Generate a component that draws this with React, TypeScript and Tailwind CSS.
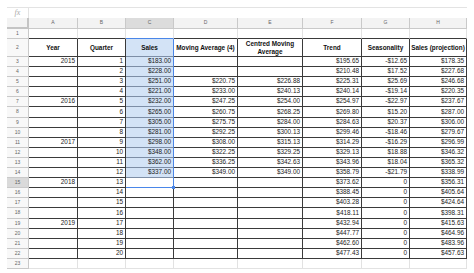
import React from 'react';

const grid = 'grid grid-cols-[22px_49px_48px_48px_64px_65px_59px_48px_57px]';
const letters = ['A', 'B', 'C', 'D', 'E', 'F', 'G', 'H'];

const sales = ['$183.00', '$228.00', '$251.00', '$221.00', '$232.00', '$265.00', '$305.00', '$281.00', '$298.00', '$348.00', '$362.00', '$337.00'];
const movingAvg = ['', '', '$220.75', '$233.00', '$247.25', '$260.75', '$275.75', '$292.25', '$308.00', '$322.25', '$336.25', '$349.00'];
const centred = ['', '', '$226.88', '$240.13', '$254.00', '$268.25', '$284.00', '$300.13', '$315.13', '$329.25', '$342.63', '$349.00'];
const trend = ['$195.65', '$210.48', '$225.31', '$240.14', '$254.97', '$269.80', '$284.63', '$299.46', '$314.29', '$329.13', '$343.96', '$358.79', '$373.62', '$388.45', '$403.28', '$418.11', '$432.94', '$447.77', '$462.60', '$477.43'];
const season = ['-$12.65', '$17.52', '$25.69', '-$19.14', '-$22.97', '$15.20', '$20.37', '-$18.46', '-$16.29', '$18.88', '$18.04', '-$21.79', '0', '0', '0', '0', '0', '0', '0', '0'];
const projection = ['$178.35', '$227.68', '$246.68', '$220.35', '$237.67', '$287.00', '$306.00', '$279.67', '$296.99', '$346.32', '$365.32', '$338.99', '$356.31', '$405.64', '$424.64', '$398.31', '$415.63', '$464.96', '$483.96', '$457.63'];
const years: Record<number, string> = { 3: '2015', 7: '2016', 11: '2017', 15: '2018', 19: '2019' };

const headers = ['Year', 'Quarter', 'Sales', 'Moving Average (4)', 'Centred Moving Average', 'Trend', 'Seasonality', 'Sales (projection)'];

// a couple of rows are a pixel taller so the grid lines up with the screenshot
const rowHeight = (row: number) => (row === 8 || row === 18 ? 'h-[11px]' : 'h-[10px]');

function RowLabel({ n, h }: { n: number; h: string }) {
  return (
    <div
      className={
        'flex items-center justify-center border-r border-b border-[#c9c9c9] text-[5px] text-[#666] ' +
        (n === 15 ? 'bg-[#dadada] ' : 'bg-[#f8f8f8] ') +
        h
      }
    >
      {n}
    </div>
  );
}

function cellTone(row: number, col: number) {
  if (row === 1) {
    return col === 2
      ? 'border-r-[#e2e2e2] border-b-[#4a86e8]'
      : 'border-r-[#e2e2e2] border-b-[#3a3a3a]';
  }
  if (row === 23) return 'border-[#e2e2e2]';
  if (col === 2 && row <= 14) return 'bg-[#d3e3f6] border-b-[#7d8ea6] border-r-[#4a86e8]';
  if (col === 2 && row === 15) return 'border-b-[#4a86e8] border-r-[#4a86e8] relative';
  return 'border-[#3a3a3a]';
}

function DataRow({ row }: { row: number }) {
  const i = row - 3;
  const values =
    row >= 3 && row <= 22
      ? [
          years[row] ?? '',
          String(row - 2),
          sales[i] ?? '',
          movingAvg[i] ?? '',
          centred[i] ?? '',
          trend[i],
          season[i],
          projection[i],
        ]
      : ['', '', '', '', '', '', '', ''];
  const h = rowHeight(row);

  return (
    <div className={grid}>
      <RowLabel n={row} h={h} />
      {values.map((v, col) => (
        <div
          key={col}
          className={
            'flex items-center justify-end pr-[2px] border-r border-b whitespace-nowrap text-[6.4px] leading-none text-[#222] ' +
            h +
            ' ' +
            cellTone(row, col)
          }
        >
          {v}
          {col === 2 && row === 15 && (
            <span className="absolute right-[-2px] bottom-[-2px] w-[3px] h-[3px] bg-[#4a86e8]" />
          )}
        </div>
      ))}
    </div>
  );
}

export default function App() {
  const rows = Array.from({ length: 21 }, (_, k) => k + 3);

  return (
    <div className="w-[474px] h-[273px] bg-white overflow-hidden font-['Liberation_Sans',Arial,sans-serif]">
      <div className="h-[7px]" />
      <div className="ml-[7px] w-[460px] h-[11px] flex border-t border-[#e3e3e3]">
        <div className="w-[22px] h-full border-r border-[#e3e3e3] flex items-center justify-center font-['Liberation_Serif',serif] italic text-[8px] text-[#aaa]">
          fx
        </div>
      </div>

      <div className="pl-[7px]">
        <div className={grid}>
          <div className="h-[11px] bg-[#f3f3f3] border-r-2 border-b-2 border-[#c4c4c4]" />
          {letters.map((l, col) => (
            <div
              key={l}
              className={
                'h-[11px] flex items-center justify-center border-r border-b border-[#c9c9c9] text-[5px] text-[#666] ' +
                (col === 2 ? 'bg-[#dcdcdc]' : 'bg-[#f3f3f3]')
              }
            >
              {l}
            </div>
          ))}
        </div>

        <DataRow row={1} />

        <div className={grid}>
          <RowLabel n={2} h="h-[18px]" />
          {headers.map((label, col) => (
            <div
              key={label}
              className={
                'h-[18px] flex items-center justify-center text-center border-r border-b text-[6.4px] leading-[7.6px] font-bold text-[#111] ' +
                (col === 4 ? '' : 'whitespace-nowrap ') +
                (col === 2 ? 'bg-[#d3e3f6] border-b-[#7d8ea6] border-r-[#4a86e8]' : 'border-[#3a3a3a]')
              }
            >
              {col === 4 ? (
                <span>
                  Centred Moving
                  <br />
                  Average
                </span>
              ) : (
                label
              )}
            </div>
          ))}
        </div>

        {rows.map((r) => (
          <DataRow key={r} row={r} />
        ))}
      </div>
    </div>
  );
}
